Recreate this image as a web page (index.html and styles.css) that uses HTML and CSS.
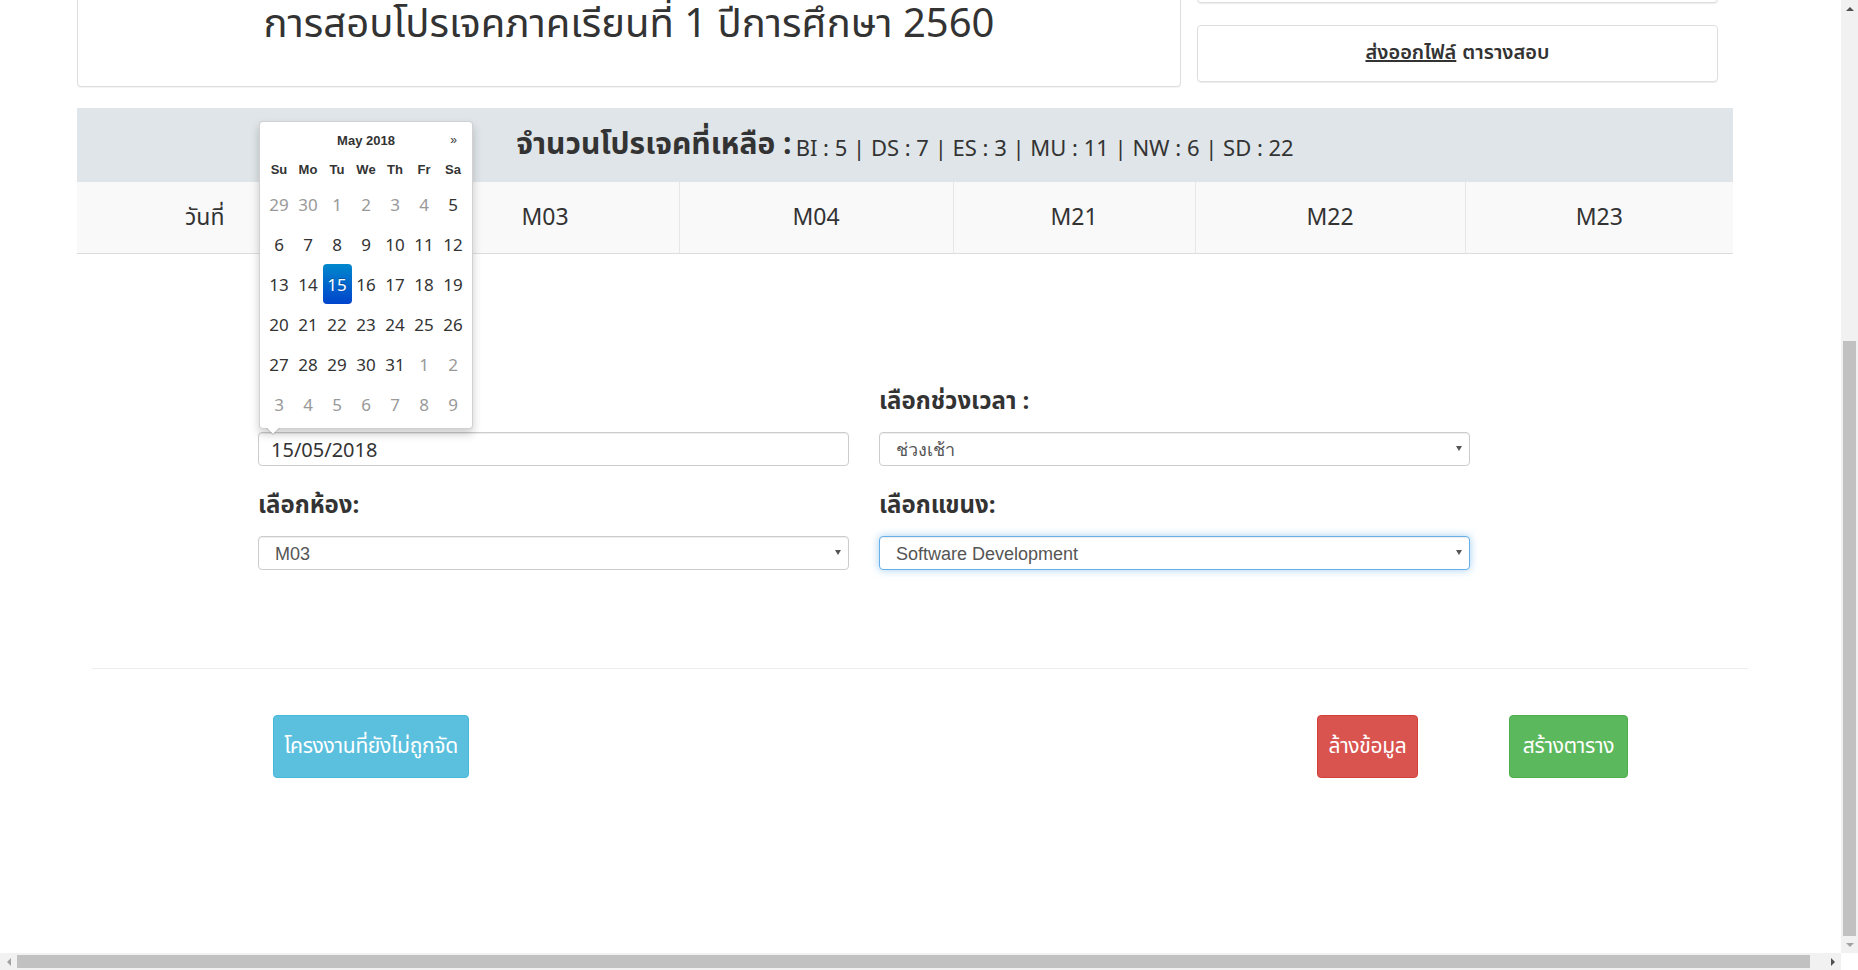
FILE: index.html
```html
<!DOCTYPE html>
<html lang="th">
<head>
<meta charset="utf-8">
<title>ตารางสอบโปรเจค</title>
<link rel="stylesheet" href="styles.css">
</head>
<body>
<div class="window">
  <div class="viewport">
    <div class="page">
      <div class="top">
        <div class="title-card">
          <h1 class="title">การสอบโปรเจคภาคเรียนที่ 1 ปีการศึกษา 2560</h1>
        </div>
        <div class="side">
          <div class="side-card side-card-first"></div>
          <div class="side-card"><a class="export-link" href="#">ส่งออกไฟล์</a> ตารางสอบ</div>
        </div>
      </div>

      <div class="remain">
        <span class="remain-label">จำนวนโปรเจคที่เหลือ :</span><span class="remain-stats">BI : 5 | DS : 7 | ES : 3 | MU : 11 | NW : 6 | SD : 22</span>
      </div>

      <table class="rooms">
        <colgroup>
          <col class="c-date"><col class="c-gap"><col class="c-m03"><col class="c-m04"><col class="c-m21"><col class="c-m22"><col class="c-m23">
        </colgroup>
        <thead>
          <tr>
            <th>วันที่</th><th></th><th>M03</th><th>M04</th><th>M21</th><th>M22</th><th>M23</th>
          </tr>
        </thead>
      </table>

      <form class="form">
        <div class="field field-date">
          <label class="label">เลือกวันที่ :</label>
          <input class="control control-date" type="text" value="15/05/2018">
          <div class="datepicker">
            <div class="dp-head">
              <span class="dp-prev"></span>
              <span class="dp-month">May 2018</span>
              <span class="dp-next">»</span>
            </div>
            <div class="dp-grid">
              <span class="dow">Su</span><span class="dow">Mo</span><span class="dow">Tu</span><span class="dow">We</span><span class="dow">Th</span><span class="dow">Fr</span><span class="dow">Sa</span>
              <span class="day old">29</span><span class="day old">30</span><span class="day old">1</span><span class="day old">2</span><span class="day old">3</span><span class="day old">4</span><span class="day">5</span>
              <span class="day">6</span><span class="day">7</span><span class="day">8</span><span class="day">9</span><span class="day">10</span><span class="day">11</span><span class="day">12</span>
              <span class="day">13</span><span class="day">14</span><span class="day active">15</span><span class="day">16</span><span class="day">17</span><span class="day">18</span><span class="day">19</span>
              <span class="day">20</span><span class="day">21</span><span class="day">22</span><span class="day">23</span><span class="day">24</span><span class="day">25</span><span class="day">26</span>
              <span class="day">27</span><span class="day">28</span><span class="day">29</span><span class="day">30</span><span class="day">31</span><span class="day old">1</span><span class="day old">2</span>
              <span class="day old">3</span><span class="day old">4</span><span class="day old">5</span><span class="day old">6</span><span class="day old">7</span><span class="day old">8</span><span class="day old">9</span>
            </div>
          </div>
        </div>
        <div class="field">
          <label class="label">เลือกช่วงเวลา :</label>
          <div class="select"><select class="control"><option>ช่วงเช้า</option></select></div>
        </div>
        <div class="field">
          <label class="label">เลือกห้อง:</label>
          <div class="select"><select class="control"><option>M03</option></select></div>
        </div>
        <div class="field">
          <label class="label">เลือกแขนง:</label>
          <div class="select"><select class="control control-focus"><option>Software Development</option></select></div>
        </div>
      </form>

      <hr class="divider">

      <div class="actions">
        <button class="btn btn-info" type="button">โครงงานที่ยังไม่ถูกจัด</button>
        <div class="actions-right">
          <button class="btn btn-danger" type="button">ล้างข้อมูล</button>
          <button class="btn btn-success" type="button">สร้างตาราง</button>
        </div>
      </div>
    </div>
  </div>

  <div class="vscroll">
    <div class="sb-btn"><span class="tri tri-up"></span></div>
    <div class="vtrack"><div class="thumb"></div></div>
    <div class="sb-btn"><span class="tri tri-down"></span></div>
  </div>
  <div class="hscroll">
    <div class="sb-btn"><span class="tri tri-left"></span></div>
    <div class="htrack"><div class="thumb"></div></div>
    <div class="sb-btn"><span class="tri tri-right"></span></div>
  </div>
  <div class="corner"></div>
</div>
</body>
</html>
```

FILE: styles.css
```css
html, body {
  margin: 0;
  padding: 0;
  background: #fff;
}

body {
  font-family: "Noto Sans Thai", "Noto Sans", "Liberation Sans", sans-serif;
  color: #333;
}

.window {
  width: 1858px;
  height: 970px;
  display: grid;
  grid-template-columns: 1fr 17px;
  grid-template-rows: 1fr 17px;
  overflow: hidden;
}

.viewport {
  overflow: hidden;
  position: relative;
}

.page {
  width: 1656px;
  padding-left: 77px;
}

/* ---------- top cards ---------- */
.top {
  display: flex;
  gap: 16px;
  margin-top: -60px;
  align-items: flex-start;
}

.title-card {
  width: 1104px;
  height: 147px;
  box-sizing: border-box;
  border: 1px solid #dedede;
  border-radius: 4px;
  box-shadow: 0 1px 1px rgba(0, 0, 0, 0.05);
  background: #fff;
}

.title {
  margin: 0;
  padding-top: 54px;
  text-align: center;
  font-weight: 400;
  font-size: 40px;
  line-height: 60px;
  color: #333;
  font-family: "Liberation Sans Narrow", "Noto Sans Thai", "Noto Sans", sans-serif;
}

.side {
  width: 521px;
  display: flex;
  flex-direction: column;
  gap: 22px;
}

.side-card {
  height: 57px;
  box-sizing: border-box;
  border: 1px solid #dedede;
  border-radius: 4px;
  box-shadow: 0 1px 1px rgba(0, 0, 0, 0.08);
  display: flex;
  align-items: center;
  justify-content: center;
  gap: 6px;
  font-size: 20px;
  font-weight: 600;
  color: #333;
  padding-bottom: 2px;
}

.side-card-first {
  height: 63px;
}

.export-link {
  color: #333;
  text-decoration: underline;
}

/* ---------- remaining band ---------- */
.remain {
  margin-top: 21px;
  height: 74px;
  background: #dfe5e8;
  display: flex;
  align-items: center;
  justify-content: center;
  gap: 4px;
}

.remain-label {
  font-size: 30px;
  font-weight: 700;
  color: #333;
}

.remain-stats {
  font-size: 22px;
  color: #333;
  font-family: "Liberation Sans Narrow", "Noto Sans", sans-serif;
  padding-top: 3px;
}

/* ---------- table ---------- */
.rooms {
  width: 1656px;
  border-collapse: collapse;
  table-layout: fixed;
}

.c-date { width: 256px; }
.c-gap { width: 78px; }
.c-m03 { width: 268px; }
.c-m04 { width: 274px; }
.c-m21 { width: 242px; }
.c-m22 { width: 270px; }
.c-m23 { width: 268px; }

.rooms th {
  height: 71px;
  background: #f9f9f9;
  border-left: 1px solid #e6e6e6;
  border-bottom: 1px solid #dddddd;
  font-weight: 400;
  font-size: 23px;
  color: #333;
  text-align: center;
  font-family: "Liberation Sans Narrow", "Noto Sans Thai", "Noto Sans", sans-serif;
  padding: 0;
}

.rooms th:first-child {
  border-left: none;
}

/* ---------- form ---------- */
.form {
  margin-top: 131px;
  padding-left: 181px;
  display: grid;
  grid-template-columns: 591px 591px;
  column-gap: 30px;
  row-gap: 23px;
}

.field {
  display: flex;
  flex-direction: column;
  gap: 13px;
}

.field-date {
  position: relative;
}

.label {
  height: 34px;
  line-height: 34px;
  font-size: 24px;
  font-weight: 700;
  color: #333;
}

.control {
  display: block;
  width: 100%;
  height: 34px;
  box-sizing: border-box;
  margin: 0;
  border: 1px solid #ccc;
  border-radius: 4px;
  background: #fff;
  box-shadow: inset 0 1px 1px rgba(0, 0, 0, 0.075);
  font-family: "Liberation Sans", Arial, sans-serif;
  font-size: 18px;
  color: #555;
  padding: 2px 30px 0 16px;
  outline: none;
  -webkit-appearance: none;
  appearance: none;
}

.control-date {
  padding: 0 0 0 12px;
  font-size: 20px;
  color: #333;
  font-family: "Liberation Sans Narrow", "Noto Sans", sans-serif;
}

.control-focus {
  border-color: #66afe9;
  box-shadow: inset 0 1px 1px rgba(0, 0, 0, 0.075), 0 0 8px rgba(102, 175, 233, 0.6);
}

.select {
  position: relative;
}

.select::after {
  content: "";
  position: absolute;
  right: 8px;
  top: 14px;
  border-left: 3px solid transparent;
  border-right: 3px solid transparent;
  border-top: 5px solid #555;
  pointer-events: none;
}

/* ---------- datepicker ---------- */
.datepicker {
  position: absolute;
  left: 1px;
  top: -264px;
  width: 214px;
  height: 308px;
  box-sizing: border-box;
  padding: 4px;
  background: #fff;
  border: 1px solid rgba(0, 0, 0, 0.18);
  border-radius: 4px;
  box-shadow: 0 5px 10px rgba(0, 0, 0, 0.2);
  z-index: 5;
  font-family: "Liberation Sans", Arial, sans-serif;
}

.datepicker::before {
  content: "";
  position: absolute;
  left: 6px;
  bottom: -7px;
  border-left: 7px solid transparent;
  border-right: 7px solid transparent;
  border-top: 7px solid rgba(0, 0, 0, 0.2);
}

.datepicker::after {
  content: "";
  position: absolute;
  left: 7px;
  bottom: -6px;
  border-left: 6px solid transparent;
  border-right: 6px solid transparent;
  border-top: 6px solid #fff;
}

.dp-head {
  height: 28px;
  display: grid;
  grid-template-columns: 29px 1fr 29px;
  align-items: center;
  text-align: center;
  font-size: 13px;
  font-weight: 700;
  color: #333;
}

.dp-next {
  font-weight: 400;
  font-size: 12px;
}

.dp-grid {
  display: grid;
  grid-template-columns: repeat(7, 29px);
  grid-template-rows: 30px repeat(6, 40px);
  justify-content: center;
}

.dow {
  display: flex;
  align-items: center;
  justify-content: center;
  font-size: 13px;
  font-weight: 700;
  color: #333;
}

.day {
  display: flex;
  align-items: center;
  justify-content: center;
  font-size: 17px;
  color: #333;
  border-radius: 4px;
  font-family: "Liberation Sans Narrow", "Noto Sans", sans-serif;
}

.day.old {
  color: #999;
}

.day.active {
  background: linear-gradient(to bottom, #0088cc, #0044cc);
  color: #fff;
  text-shadow: 0 -1px 0 rgba(0, 0, 0, 0.25);
}

/* ---------- divider & actions ---------- */
.divider {
  margin: 98px 0 0 15px;
  width: 1656px;
  border: 0;
  border-top: 1px solid #eee;
  height: 0;
}

.actions {
  margin-top: 46px;
  display: flex;
  align-items: flex-start;
  padding: 0 105px 0 196px;
}

.actions-right {
  margin-left: auto;
  display: flex;
  gap: 91px;
}

.btn {
  height: 63px;
  border-radius: 4px;
  border: 1px solid transparent;
  color: #fff;
  font-size: 21px;
  letter-spacing: -0.3px;
  white-space: nowrap;
  font-family: "Noto Sans Thai", "Noto Sans", sans-serif;
  padding: 0;
  cursor: pointer;
}

.btn-info {
  width: 196px;
  background: #5bc0de;
  border-color: #46b8da;
}

.btn-danger {
  width: 101px;
  background: #d9534f;
  border-color: #d43f3a;
}

.btn-success {
  width: 119px;
  background: #5cb85c;
  border-color: #4cae4c;
}

/* ---------- scrollbars ---------- */
.vscroll {
  background: #f1f1f1;
  display: flex;
  flex-direction: column;
}

.hscroll {
  background: #f1f1f1;
  display: flex;
}

.corner {
  background: #fff;
}

.sb-btn {
  width: 17px;
  height: 17px;
  flex: none;
  display: flex;
  align-items: center;
  justify-content: center;
}

.vtrack {
  flex: 1;
  display: flex;
  flex-direction: column;
  padding: 324px 2px 0;
}

.htrack {
  flex: 1;
  display: flex;
  padding: 2px 14px 2px 0;
}

.thumb {
  flex: 1;
  background: #c1c1c1;
}

.tri {
  width: 0;
  height: 0;
}

.tri-up {
  border-left: 4px solid transparent;
  border-right: 4px solid transparent;
  border-bottom: 4px solid #505050;
}

.tri-down {
  border-left: 4px solid transparent;
  border-right: 4px solid transparent;
  border-top: 4px solid #a3a3a3;
}

.tri-left {
  border-top: 4px solid transparent;
  border-bottom: 4px solid transparent;
  border-right: 4px solid #a3a3a3;
}

.tri-right {
  border-top: 4px solid transparent;
  border-bottom: 4px solid transparent;
  border-left: 4px solid #505050;
}
```
